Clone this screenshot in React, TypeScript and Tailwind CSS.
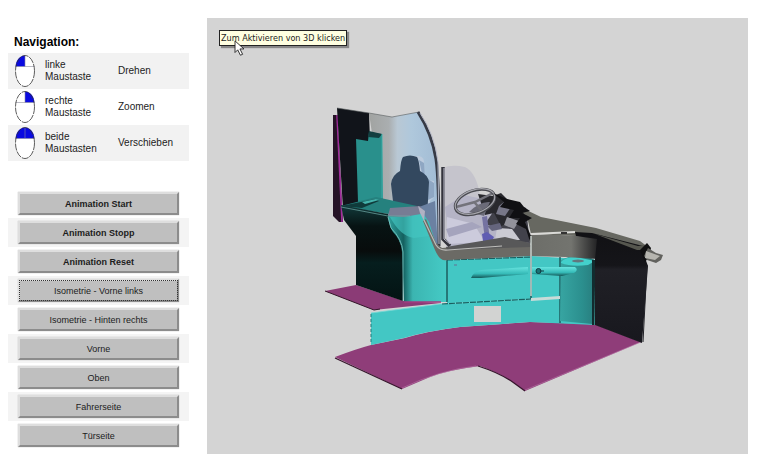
type MouseSide = 'left' | 'right' | 'both';

const mouseRows: { side: MouseSide; lines: [string, string]; action: string }[] = [
  { side: 'left', lines: ['linke', 'Maustaste'], action: 'Drehen' },
  { side: 'right', lines: ['rechte', 'Maustaste'], action: 'Zoomen' },
  { side: 'both', lines: ['beide', 'Maustasten'], action: 'Verschieben' },
];

const commands = [
  { label: 'Animation Start', style: 'font-bold' },
  { label: 'Animation Stopp', style: 'font-bold' },
  { label: 'Animation Reset', style: 'font-bold' },
  { label: 'Isometrie - Vorne links', style: 'outline-1 -outline-offset-2 outline-dotted outline-[#333]' },
  { label: 'Isometrie - Hinten rechts', style: '' },
  { label: 'Vorne', style: '' },
  { label: 'Oben', style: '' },
  { label: 'Fahrerseite', style: '' },
  { label: 'Türseite', style: '' },
];

function MouseIcon({ side }: { side: MouseSide }) {
  return (
    <svg viewBox="0 0 20 32" className="block h-8 w-5" aria-hidden="true">
      <ellipse cx="10" cy="16" rx="9.5" ry="15.5" fill="#fff" />
      {side !== 'right' && <path d="M10 .5C5 .5.8 5 .6 11.500H10Z" fill="#0a0ae0" />}
      {side !== 'left' && <path d="M10 .5C15 .5 19.200 5 19.400 11.500H10Z" fill="#0a0ae0" />}
      <path d="M.5 11.500H19.500M10 1V11.500" stroke="#8c8c9c" strokeWidth=".6" />
      <ellipse cx="10" cy="16" rx="9.500" ry="15.500" fill="none" stroke="#333" strokeWidth=".8" strokeDasharray="7 1" />
    </svg>
  );
}

function CockpitModel() {
  return (
    <svg viewBox="207 18 541 436" className="block h-auto w-full" role="img" aria-label="3D">
      <defs>
        <linearGradient id="glass" x1="0" x2="1" y1="0" y2="0">
          <stop offset="0" stopColor="#a1a3a1" />
          <stop offset=".28" stopColor="#aaaeb0" />
          <stop offset=".4" stopColor="#b9c8d4" />
          <stop offset=".6" stopColor="#afc8dc" />
          <stop offset="1" stopColor="#a1bbd4" />
        </linearGradient>
        <linearGradient id="side" x1="388" x2="447" y1="0" y2="0" gradientUnits="userSpaceOnUse">
          <stop offset="0" stopColor="#2fa39f" />
          <stop offset=".26" stopColor="#14605f" />
          <stop offset=".42" stopColor="#3bb5b1" />
          <stop offset="1" stopColor="#45cbc6" />
        </linearGradient>
        <linearGradient id="shade" x1="0" x2="0" y1="0" y2="1">
          <stop offset="0" stopColor="#123b3c" />
          <stop offset=".22" stopColor="#071313" />
          <stop offset=".48" stopColor="#080c0c" />
          <stop offset=".6" stopColor="#061e1e" />
          <stop offset="1" stopColor="#041313" />
        </linearGradient>
        <linearGradient id="rail" x1="531" x2="598" y1="0" y2="0" gradientUnits="userSpaceOnUse">
          <stop offset="0" stopColor="#6d6e69" />
          <stop offset=".6" stopColor="#73746f" />
          <stop offset="1" stopColor="#202022" />
        </linearGradient>
        <linearGradient id="corner" x1="0" x2="1" y1="0" y2="0">
          <stop offset="0" stopColor="#37a5a2" />
          <stop offset=".6" stopColor="#2b8f8e" />
          <stop offset="1" stopColor="#287a7b" />
        </linearGradient>
        <linearGradient id="handle" x1="0" x2="0" y1="0" y2="1">
          <stop offset="0" stopColor="#67e4df" />
          <stop offset=".6" stopColor="#36bbb8" />
          <stop offset="1" stopColor="#145858" />
        </linearGradient>
        <linearGradient id="night" x1="0" x2="0" y1="0" y2="1">
          <stop offset="0" stopColor="#111114" />
          <stop offset=".3" stopColor="#151519" />
          <stop offset=".34" stopColor="#202026" />
          <stop offset="1" stopColor="#18181e" />
        </linearGradient>
      </defs>

      {/* floor plates */}
      <path d="M325 291L356 285L404 301L441 303L374 310Z" fill="#8b3b76" />
      <path d="M325 291L374 310L380 309" fill="none" stroke="#321528" />
      <path d="M335 357Q356 349 371 345L405 338Q428 331 460 327L530 322L594 324L641 342L525 391L514 383Q502 374 480 366Q448 370 430 377L402 389Z" fill="#8f3d79" />
      <path d="M335 358L402 389M478 366Q500 373 514 383L525 391" fill="none" stroke="#37152d" strokeWidth="1.300" />
      <path d="M525 390L641 342M402 388Q440 370 476 366" fill="none" stroke="#b977a7" strokeWidth=".6" />

      {/* rear wall and glazing */}
      <path d="M333 115L337 115L343 222L339 222L333 216Z" fill="#251326" />
      <path d="M337 115L342 222" stroke="#a12c9c" strokeWidth="1.600" />
      <path d="M369 113L392 117L419 112Q433 132 438 163L440 248L382 202Z" fill="url(#glass)" />
      <path d="M337 108L369 113L370 140L376 200L343 210Z" fill="#11141a" />
      <path d="M356 139L368 141L369 132L382 134L383 200L358 202Z" fill="#29908c" />
      <path d="M369 131L382 134L379 138L368 137Z" fill="#133f40" />
      <path d="M382 134V198" stroke="#3eb4af" strokeWidth=".8" />
      <path d="M337 108L369 113L392 117L419 112" fill="none" stroke="#555b5d" strokeWidth=".6" />

      {/* seat */}
      <path d="M406 156L419 156Q425 157 424 165L425 177Q430 181 434 181V197L430 201L428 215H416Z" fill="#bccbdd" />
      <path d="M419 160L424 163L425 177L434 183V197L428 200Z" fill="#8fa7c3" />
      <path d="M403 157Q410 154 417 157Q419 160 420 171Q428 175 429 182L427 218L394 210L391 184Q392 175 400 171Q401 159 403 157Z" fill="#33485f" />
      <path d="M419 207L435 201L438 249L430 240Z" fill="#6b81a2" />

      {/* shelf and side cabinet */}
      <path d="M341 206L376 197L417 206L388 214Z" fill="#25817e" />
      <path d="M341 206L376 199L379 201L362 208Z" fill="#103b3b" />
      <path d="M362 202L376 199L379 200L365 204Z" fill="#45b4ad" />
      <path d="M341 205L388 214L391 218L397 235L403 250L403 301L356 285V236L350 228L344 220Z" fill="url(#shade)" />
      <path d="M388 216L422 212L429 222L435 241L441 257L447 261V302H404L402 252Q401 240 393 232Q389 226 388 216Z" fill="url(#side)" />
      <path d="M390 217L422 214L430 236L414 238Q400 236 390 217Z" fill="#43c6c1" opacity=".65" />
      <path d="M388 217L391 228Q402 239 403 252V301" fill="none" stroke="#84cdc9" strokeWidth=".8" />
      <path d="M390 208L420 206L426 213L404 217L388 216Z" fill="#777c94" />
      <path d="M418 206L425 211L424 221L420 213Z" fill="#b0b2c4" />
      <path d="M341 207L388 216L410 216" fill="none" stroke="#74adab" strokeWidth=".7" />

      {/* cabin interior */}
      <path d="M442 168Q452 164 465 167Q475 172 479 190L487 247L446 247Z" fill="#c5c4cc" />
      <path d="M445 207L464 195L520 207L529 245L450 247Z" fill="#b5b4c6" />
      <path d="M447 217L474 224L485 242L447 244Z" fill="#cccbdc" />
      <path d="M446 229L472 222L482 227L449 237Z" fill="#a5a4bd" />
      <path d="M480 198L500 197L526 208L530 243L507 241L500 229L485 224L493 212Z" fill="#42424b" />
      <path d="M478 194L493 196L501 193L507 199L520 205L527 216L522 226L512 222L501 226L494 213L485 215Z" fill="#29292e" />
      <path d="M499 206L505 201L511 207L505 216L496 214Z" fill="#777788" />
      <path d="M507 217L519 221L514 229L504 225Z" fill="#92929b" />
      <path d="M497 228L512 229L520 240H495Z" fill="#cacad2" />
      <path d="M487 226L500 223L502 229L492 231Z" fill="#65657d" />
      <path d="M482 217L487 216L490 240L485 239Z" fill="#7573a1" />
      <path d="M482 234L487 232L494 237L492 241H483Z" fill="#605db2" />
      <path d="M469 212Q480 201 490 202L484 216Z" fill="#6b6b78" />
      <path d="M456 207L475 202L493 193M475 203L484 213" fill="none" stroke="#73737b" strokeWidth="2.500" />
      <ellipse cx="475" cy="202" rx="20.500" ry="11.500" transform="rotate(-19 475 202)" fill="none" stroke="#494a50" strokeWidth="3" />
      <ellipse cx="475" cy="201.500" rx="20.500" ry="11.500" transform="rotate(-19 475 201.500)" fill="none" stroke="#a6a6ad" strokeWidth="1.200" />

      {/* windscreen frame */}
      <path d="M418 112Q432 134 436 159Q439 179 439 246" fill="none" stroke="#363a45" strokeWidth="3" />
      <path d="M420 113Q435 135 438 162L439 244" fill="none" stroke="#b8bac8" strokeWidth="1" />
      <path d="M443 167V239L450 246" fill="none" stroke="#34343d" strokeWidth="3.500" />
      <path d="M444 168V239L450 244" fill="none" stroke="#c1c1ce" strokeWidth="1" />

      {/* front cabinets */}
      <path d="M447 260L531 256L564 258L596 260L595 325L530 322L460 327Q427 331 404 338L371 345V313L440 304H447Z" fill="#43c7c4" />
      <path d="M371 313L440 304L531 299L560 298" fill="none" stroke="#77d9d5" strokeWidth=".8" />
      <path d="M371 314V344" stroke="#237f7c" strokeDasharray="3 2" />
      <path d="M447 259V302M531 256V299M560 257V323" stroke="#174e50" strokeWidth="1.300" />
      <path d="M442 304L531 299M447 260L531 257" fill="none" stroke="#1a5e5f" strokeWidth="1.200" strokeDasharray="6 1" />
      <path d="M531 298L560 296V299L531 301Z" fill="#c9dbd8" />
      <path d="M404 302H441" stroke="#a33b82" strokeWidth="1.500" />
      <path d="M561 260L571 256L591 258L597 261L592 324L560 321Z" fill="url(#corner)" />
      <path d="M561 262Q565 257 576 257L595 261L588 265Q571 267 561 263Z" fill="#43d0cb" />
      <ellipse cx="578" cy="261" rx="6" ry="1.500" fill="#62777e" />
      <path d="M594 260V325" stroke="#122c2f" strokeWidth="4" />
      <path d="M596 259L595 325" stroke="#54ccc7" strokeWidth="1.200" />
      <path d="M471 278Q474 271 481 270L528 267V274L481 278Z" fill="url(#handle)" />
      <path d="M532 267L575 267Q579 270 574 273L562 276L532 274Z" fill="url(#handle)" />
      <circle cx="538.500" cy="271" r="2.500" fill="#187174" stroke="#123b43" />
      <path d="M540 271H544" stroke="#123b43" />
      <path d="M454 265H457" stroke="#676f93" />
      <path d="M474 306H501V322H474Z" fill="#d2d3d2" />

      {/* dashboard and outer wall */}
      <path d="M426 219L436 243L442 248L503 242L531 245V256L447 260Q440 262 435 250L423 221Z" fill="#6b6a65" />
      <path d="M446 247L505 237L530 243L531 247L447 250Z" fill="#585859" />
      <path d="M424 220L436 245Q440 251 448 250L502 246" fill="none" stroke="#bdbdbb" strokeWidth="1.200" />
      <path d="M520 207L541 217L596 228L640 241L648 247L646 250L576 236L531 234L528 221Z" fill="#676861" />
      <path d="M493 193L507 199L520 202L524 207L530 211L522 213L532 218L525 222L531 236V245L526 229L516 224L520 218L509 218L514 210L500 207L504 202Z" fill="#101013" />
      <path d="M531 235H560L576 236L598 238V259L565 257L531 256Z" fill="url(#rail)" />
      <path d="M531 234L575 232" stroke="#dadad7" strokeWidth="2" />
      <path d="M561 232H567V234H561Z" fill="#333" />
      <path d="M531 236V296" stroke="#c9d0cd" strokeWidth="1.500" />
      <path d="M575 232L592 233L647 247L645 258L648 266L642 343L595 325V259L597 239L576 236Z" fill="url(#night)" />
      <path d="M595 234L638 246L646 245L644 250L637 250Z" fill="#56574f" />
      <path d="M640 250L647 243L651 248L649 257L645 262Z" fill="#101011" />
      <path d="M648 248L656 253L663 255L661 260L656 263L647 260L644 256Z" fill="#62625e" />
      <path d="M646 251L660 256L655 260L645 258Z" fill="#b6b5af" />
      <path d="M647 265L643 342" stroke="#202026" strokeWidth="1" />
    </svg>
  );
}

export default function App() {
  return (
    <div className="flex items-start bg-white pr-3 pl-2 font-['Liberation_Sans',Arial,sans-serif] text-[#1c1c1c]">
      <aside className="w-[181px] shrink-0 pt-8">
        <h1 className="mb-px pl-[6px] text-xs leading-5 font-bold text-black">Navigation:</h1>
        <table className="w-full table-fixed border-collapse text-[10px] leading-3">
          <tbody>
            {mouseRows.map((row) => (
              <tr key={row.side} className="h-[36px] odd:bg-[#f2f2f2]">
                <td className="w-[37px] py-0 pl-[7px]"><MouseIcon side={row.side} /></td>
                <th scope="row" className="w-[73px] text-left font-normal">
                  {row.lines[0]}<br />{row.lines[1]}
                </th>
                <td>{row.action}</td>
              </tr>
            ))}
          </tbody>
        </table>
        <ul className="mt-7">
          {commands.map(({ label, style }) => (
            <li key={label} className="px-[10px] py-[3px] even:bg-[#f4f4f4]">
              <button
                type="button"
                className={`block h-[23px] w-full border-2 border-t-[#dedede] border-r-[#8c8c8c] border-b-[#8c8c8c] border-l-[#dedede] bg-[#bfbfbf] text-[9px] leading-3 shadow-[0_0_1px_#aaa] ${style}`}
              >
                {label}
              </button>
            </li>
          ))}
        </ul>
      </aside>
      <main className="relative mt-[18px] ml-[18px] min-w-0 flex-1 bg-[#d4d4d4]">
        <CockpitModel />
        <div
          role="tooltip"
          className="absolute top-3 left-3 border border-[#222] bg-[#ffffe1] px-px font-['DejaVu_Sans_Condensed','DejaVu_Sans',Tahoma,sans-serif] text-[9px] leading-[14px] whitespace-nowrap shadow-[2px_2px_1px_#888]"
        >
          Zum Aktivieren von 3D klicken
        </div>
        <svg viewBox="0 0 12 19" className="absolute top-[22px] left-[27px] h-[17px] w-[11px]" aria-hidden="true">
          <path d="M1 1V14L4 11L7 17L9.500 16L6.500 10H11Z" fill="#fff" stroke="#222" />
        </svg>
      </main>
    </div>
  );
}
